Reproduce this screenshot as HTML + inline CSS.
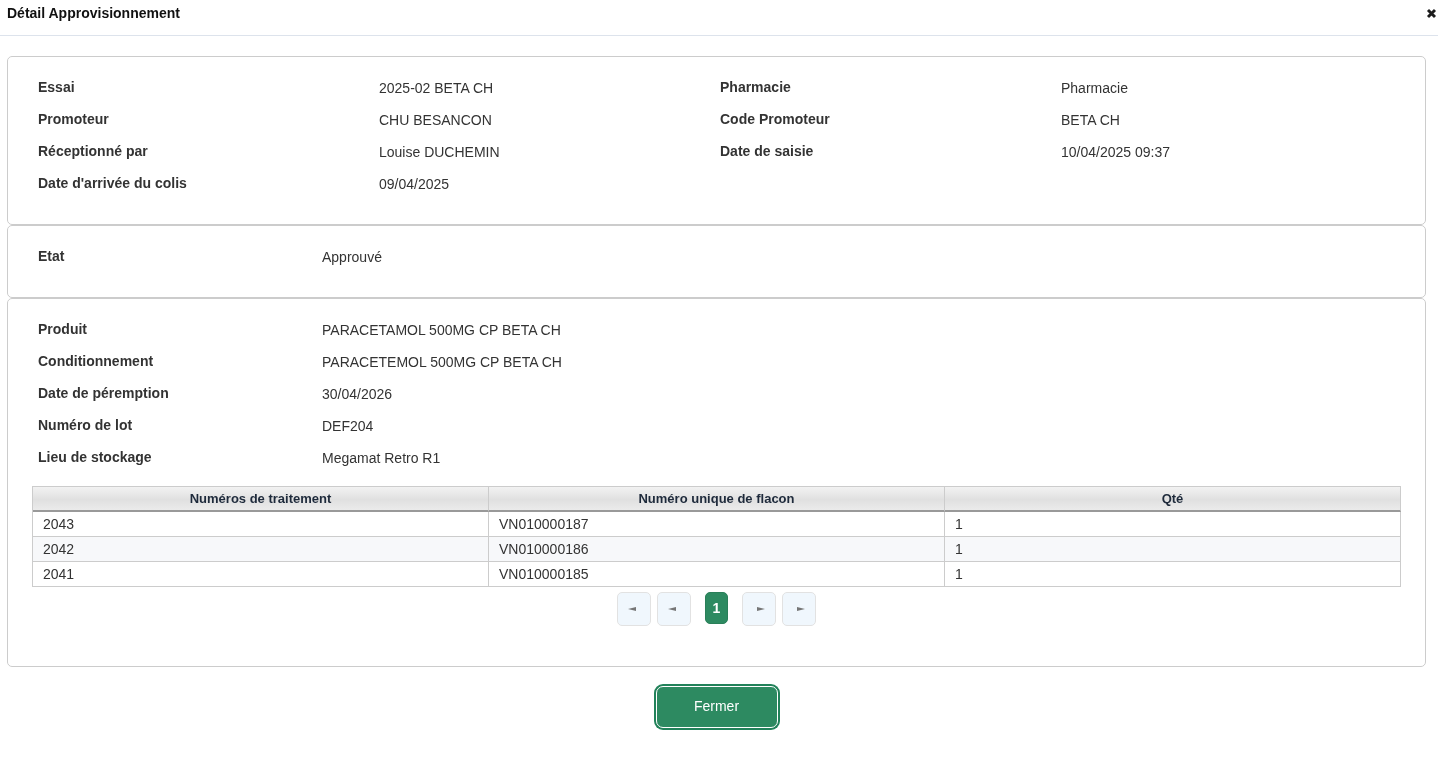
<!DOCTYPE html>
<html><head><meta charset="utf-8">
<style>
*{box-sizing:border-box;margin:0;padding:0}
html,body{width:1438px;height:761px;overflow:hidden;background:#fff;font-family:"Liberation Sans",sans-serif;font-size:14px;color:#333}
.a{position:absolute;white-space:nowrap;line-height:16px}
.title{left:7px;top:5px;font-weight:bold;color:#111}
.close{left:1426px;top:8px;line-height:0}
.hdr{position:absolute;left:0;top:35px;width:1438px;height:1px;background:#dde3ec}
.panel{position:absolute;left:7px;width:1419px;border:1px solid #ccc;border-radius:5px}
.l{font-weight:bold}
</style></head><body><div id="root" style="position:absolute;left:0;top:0;width:1438px;height:761px;will-change:transform">
<div class="a title">Détail Approvisionnement</div>
<div class="a close"><svg width="12" height="12" viewBox="0 0 12 12"><path d="M2 2L9 9M9 2L2 9" stroke="#1c1c1c" stroke-width="2.9"/></svg></div>
<div class="hdr"></div>

<div class="panel" style="top:56px;height:169px"></div>
<div class="panel" style="top:225px;height:73px"></div>
<div class="panel" style="top:298px;height:369px"></div>

<div class="a l" style="left:38px;top:79px">Essai</div>
<div class="a l" style="left:38px;top:111px">Promoteur</div>
<div class="a l" style="left:38px;top:143px">Réceptionné par</div>
<div class="a l" style="left:38px;top:175px">Date d'arrivée du colis</div>
<div class="a" style="left:379px;top:80px">2025-02 BETA CH</div>
<div class="a" style="left:379px;top:112px">CHU BESANCON</div>
<div class="a" style="left:379px;top:144px">Louise DUCHEMIN</div>
<div class="a" style="left:379px;top:176px">09/04/2025</div>
<div class="a l" style="left:720px;top:79px">Pharmacie</div>
<div class="a l" style="left:720px;top:111px">Code Promoteur</div>
<div class="a l" style="left:720px;top:143px">Date de saisie</div>
<div class="a" style="left:1061px;top:80px">Pharmacie</div>
<div class="a" style="left:1061px;top:112px">BETA CH</div>
<div class="a" style="left:1061px;top:144px">10/04/2025 09:37</div>

<div class="a l" style="left:38px;top:248px">Etat</div>
<div class="a" style="left:322px;top:249px">Approuvé</div>

<div class="a l" style="left:38px;top:321px">Produit</div>
<div class="a l" style="left:38px;top:353px">Conditionnement</div>
<div class="a l" style="left:38px;top:385px">Date de péremption</div>
<div class="a l" style="left:38px;top:417px">Numéro de lot</div>
<div class="a l" style="left:38px;top:449px">Lieu de stockage</div>
<div class="a" style="left:322px;top:322px">PARACETAMOL 500MG CP BETA CH</div>
<div class="a" style="left:322px;top:354px">PARACETEMOL 500MG CP BETA CH</div>
<div class="a" style="left:322px;top:386px">30/04/2026</div>
<div class="a" style="left:322px;top:418px">DEF204</div>
<div class="a" style="left:322px;top:450px">Megamat Retro R1</div>


<style>
.tbl{position:absolute;left:32px;top:486px;width:1369px;height:101px;border:1px solid #ccc;border-right:none;border-bottom:none}
.th{position:absolute;top:0;height:25px;border-right:1px solid #ccc;border-bottom:2px solid #999;background:linear-gradient(#f2f2f2,#e0e0e0 55%,#ebebeb);text-align:center;font-weight:bold;font-size:13px;color:#1e2a3b;line-height:23px}
.td{position:absolute;height:25px;border-right:1px solid #ccc;border-bottom:1px solid #ccc;padding-left:10px;line-height:24px;font-size:14px;color:#333;white-space:nowrap}
.alt{background:#f7f8fa}
.pg{position:absolute;top:592px;width:34px;height:34px;border:1px solid #e2e2e2;border-radius:5px;background:#f0f7fd}
.pg svg{position:absolute;left:0;top:0}
.act{position:absolute;left:705px;top:592px;width:23px;height:32px;border-radius:5px;background:#2d8a61;border:1px solid #2a7f59;color:#fff;font-weight:bold;font-size:14px;text-align:center;line-height:30px}
.btn{position:absolute;left:654px;top:684px;width:126px;height:46px;border-radius:9px;background:#22825a}
.btn .in{position:absolute;left:2px;top:2px;right:2px;bottom:2px;border:1px solid #fff;border-radius:7px;background:#2d8a61;color:#fff;font-size:14px;text-align:center;line-height:38px;padding-right:1px}
</style>
<div class="tbl">
  <div class="th" style="left:0;width:456px">Numéros de traitement</div>
  <div class="th" style="left:456px;width:456px">Numéro unique de flacon</div>
  <div class="th" style="left:912px;width:456px">Qté</div>
  <div class="td" style="left:0;top:25px;width:456px">2043</div>
  <div class="td" style="left:456px;top:25px;width:456px">VN010000187</div>
  <div class="td" style="left:912px;top:25px;width:456px">1</div>
  <div class="td alt" style="left:0;top:50px;width:456px">2042</div>
  <div class="td alt" style="left:456px;top:50px;width:456px">VN010000186</div>
  <div class="td alt" style="left:912px;top:50px;width:456px">1</div>
  <div class="td" style="left:0;top:75px;width:456px">2041</div>
  <div class="td" style="left:456px;top:75px;width:456px">VN010000185</div>
  <div class="td" style="left:912px;top:75px;width:456px">1</div>
</div>
<div class="pg" style="left:617px"><svg width="34" height="34"><path d="M10 16L18 14V18Z" fill="#767676"/></svg></div>
<div class="pg" style="left:657px"><svg width="34" height="34"><path d="M10 16L18 14V18Z" fill="#767676"/></svg></div>
<div class="act">1</div>
<div class="pg" style="left:742px"><svg width="34" height="34"><path d="M22 16L14 14V18Z" fill="#767676"/></svg></div>
<div class="pg" style="left:782px"><svg width="34" height="34"><path d="M22 16L14 14V18Z" fill="#767676"/></svg></div>
<div class="btn"><div class="in">Fermer</div></div>
</div></body></html>
